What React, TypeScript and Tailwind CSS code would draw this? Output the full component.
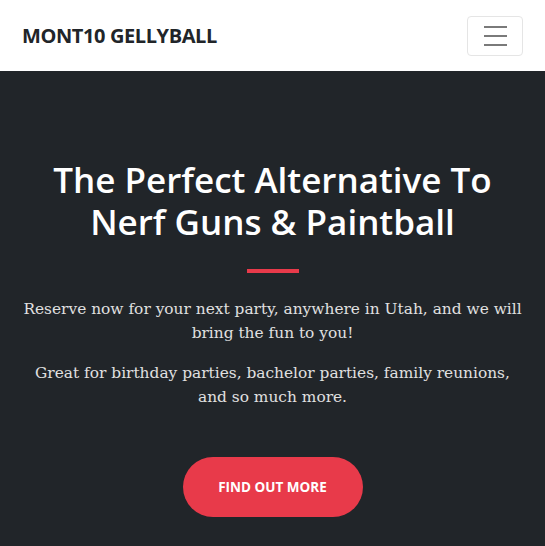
export default function App() {
  return (
    <div className="min-h-[546px] bg-[#212529]">
      <nav className="flex h-[71px] items-center justify-between bg-white pl-[22px] pr-[22px]">
        <a
          href="#"
          className="text-[20px] font-bold uppercase tracking-[-0.4px] text-[#212529]"
          style={{ fontFamily: '"Open Sans", "Noto Sans", sans-serif' }}
        >
          Mont10 Gellyball
        </a>
        <button
          type="button"
          aria-label="Toggle navigation"
          className="flex h-[40px] w-[56px] flex-col items-center justify-center gap-[7px] rounded-[4px] border border-[#e5e5e5]"
        >
          <span className="block h-[2px] w-[23px] bg-[#7a7a7a]" />
          <span className="block h-[2px] w-[23px] bg-[#7a7a7a]" />
          <span className="block h-[2px] w-[23px] bg-[#7a7a7a]" />
        </button>
      </nav>

      <header className="flex flex-col items-center px-4 pt-[88px] text-center">
        <h1
          className="text-[35px] font-semibold leading-[42px] text-white"
          style={{ fontFamily: '"Open Sans", "Noto Sans", sans-serif' }}
        >
          The Perfect Alternative To
          <br />
          Nerf Guns &amp; Paintball
        </h1>
        <hr className="mt-[26px] h-[4px] w-[52px] border-0 bg-[#e83a4a]" />
        <div
          className="mt-[24px] max-w-[502px] text-[15.4px] leading-[24px] text-[#e0e0e0]"
          style={{ fontFamily: '"DejaVu Serif", serif' }}
        >
          <p>
            Reserve now for your next party, anywhere in Utah, and we will
            bring the fun to you!
          </p>
          <p className="mt-[16px]">
            Great for birthday parties, bachelor parties, family reunions,
            and so much more.
          </p>
        </div>
        <a
          href="#"
          className="mt-[48px] flex h-[60px] w-[180px] items-center justify-center rounded-full bg-[#e83a4a] text-[13.5px] font-bold uppercase text-white"
          style={{ fontFamily: '"Open Sans", "Noto Sans", sans-serif' }}
        >
          Find Out More
        </a>
      </header>
    </div>
  );
}
